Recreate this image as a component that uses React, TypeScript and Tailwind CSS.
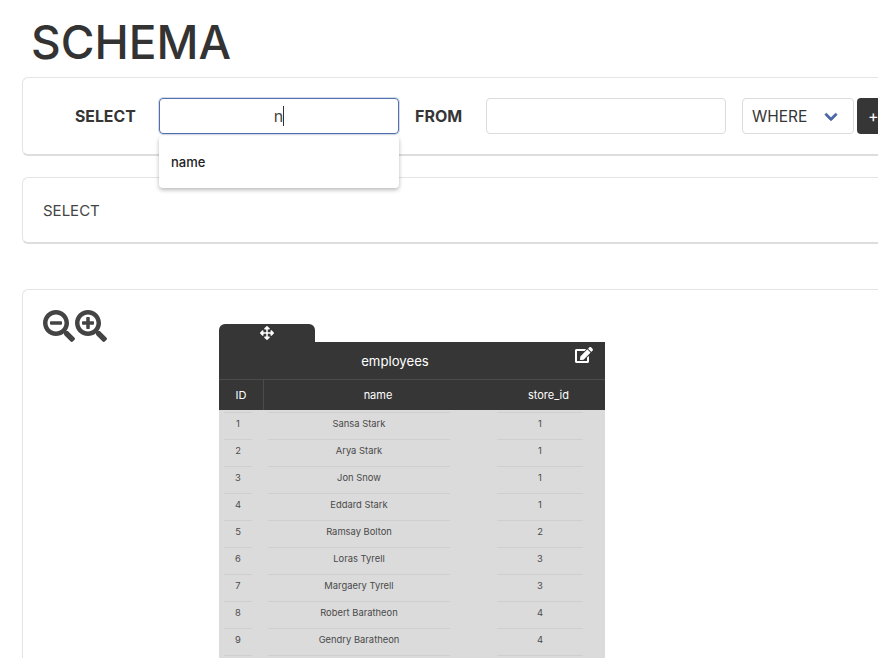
import { FaSearchMinus, FaSearchPlus, FaArrowsAlt, FaEdit, FaChevronDown } from "react-icons/fa";

const rows: [string, string, string][] = [
  ["1", "Sansa Stark", "1"],
  ["2", "Arya Stark", "1"],
  ["3", "Jon Snow", "1"],
  ["4", "Eddard Stark", "1"],
  ["5", "Ramsay Bolton", "2"],
  ["6", "Loras Tyrell", "3"],
  ["7", "Margaery Tyrell", "3"],
  ["8", "Robert Baratheon", "4"],
  ["9", "Gendry Baratheon", "4"],
  ["", "", ""],
];

export default function App() {
  return (
    <div className="h-[658px] w-[878px] overflow-hidden bg-white text-[#363636] font-['Inter',sans-serif]">
      <div className="w-[900px] pl-[22px]">
        <h1 className="h-[77px] pl-[9px] pt-[14px] text-[46px] leading-[56px] font-medium text-[#333333]">SCHEMA</h1>

        <div className="flex h-[79px] items-start rounded-l-[6px] border border-r-0 border-[#e4e4e4] border-b-2 border-b-[#dddddd] pt-[20px] pl-[52px]">
          <div className="flex h-[36px] w-[60px] items-center pt-[2px] text-[15.8px] font-bold whitespace-nowrap">SELECT</div>
          <div className="relative ml-[24px] w-[240px]">
            <div className="flex h-[36px] items-center justify-center rounded-[4px] border border-[#5270ad] text-[16px] shadow-[0_0_0_1px_rgba(82,112,173,0.25)]">
              <span className="border-r border-[#333333] leading-[20px] text-[#444444]">n</span>
            </div>
            <div className="absolute top-[38px] left-0 z-10 flex h-[52px] w-full items-center rounded-[4px] bg-white pt-[2px] pl-[12px] text-[13px] font-medium text-[#222222] shadow-[0_2px_4px_rgba(0,0,0,0.28)]">
              name
            </div>
          </div>
          <div className="ml-[16px] flex h-[36px] w-[47px] items-center text-[16px] font-bold">FROM</div>
          <div className="ml-[24px] h-[36px] w-[240px] rounded-[4px] border border-[#dbdbdb]" />
          <div className="ml-[16px] flex h-[36px] w-[112px] items-center justify-between rounded-[4px] border border-[#dbdbdb] pt-[1px] pr-[15px] pl-[9px] text-[15.5px]">
            <span>WHERE</span>
            <FaChevronDown className="h-[14px] w-[14px] text-[#4a66a6] [stroke-width:30px] stroke-[#4a66a6]" />
          </div>
          <div className="ml-[3px] flex h-[36px] w-[40px] items-center rounded-[4px] bg-[#363636] pl-[11px] text-[16px] text-white">+</div>
        </div>

        <div className="mt-[21px] flex h-[67px] items-center rounded-l-[6px] border border-r-0 border-[#e4e4e4] border-b-2 border-b-[#dddddd] pt-[2px] pl-[20px] text-[15px] text-[#444444]">
          SELECT
        </div>

        <div className="mt-[45px] flex h-[500px] items-start rounded-l-[6px] border border-r-0 border-[#e4e4e4] pt-[20px] pl-[20px]">
          <div className="flex w-[176px] text-[#444444]">
            <FaSearchMinus className="h-[32px] w-[32px]" />
            <FaSearchPlus className="h-[32px] w-[32px]" />
          </div>
          <div className="mt-[14px] w-[386px]">
            <div className="flex h-[18px] w-[96px] items-start justify-center rounded-t-[6px] bg-[#363636] pt-[2px] text-white">
              <FaArrowsAlt className="h-[14px] w-[14px]" />
            </div>
            <div className="relative flex h-[38px] items-center justify-center border-b border-[#4c4c4c] bg-[#363636] pt-[2px] pr-[34px] text-[13.2px] text-white">
              employees
              <FaEdit className="absolute top-[5px] right-[12px] h-[16px] w-[18px]" />
            </div>
            <div className="flex h-[30px] items-center bg-[#363636] text-[11px] text-white">
              <div className="flex h-full w-[45px] items-center justify-center border-r border-[#4c4c4c]">ID</div>
              <div className="w-[228px] text-center">name</div>
              <div className="w-[113px] text-center">store_id</div>
            </div>
            <div className="bg-[#dbdbdb] text-[9.4px] text-[#4a4a4a]">
              {rows.map(([id, name, store], i) => (
                <div key={i} className="flex h-[27px] pl-[5px]">
                  <div className="mt-[2px] flex h-[24px] w-[28px] items-center justify-center border-t border-[#cfcfcf]">{id}</div>
                  <div className="mt-[2px] ml-[16px] flex h-[24px] w-[182px] items-center justify-center border-t border-[#cfcfcf]">{name}</div>
                  <div className="mt-[2px] ml-[47px] flex h-[24px] w-[86px] items-center justify-center border-t border-[#cfcfcf]">{store}</div>
                </div>
              ))}
            </div>
          </div>
        </div>
      </div>
    </div>
  );
}
